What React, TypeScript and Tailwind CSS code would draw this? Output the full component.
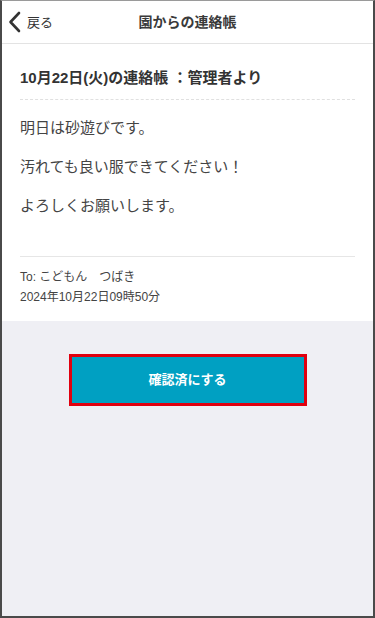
export default function App() {
  const font = { fontFamily: '"Liberation Sans", "Noto Sans CJK JP", sans-serif' };
  return (
    <div
      className="w-[375px] h-[618px] flex flex-col bg-[#efeff4] border-2 border-t border-[#4a4a4a] border-t-[#9a9a9a] overflow-hidden"
      style={font}
    >
      <header className="h-[43px] shrink-0 bg-white border-b border-[#e3e3e3] flex items-center relative">
        <button className="flex items-center pl-[5px] gap-[4px] text-[#333] z-10">
          <svg width="16" height="22" viewBox="0 0 16 22" fill="none">
            <path d="M12 2 L3.5 11 L12 20" stroke="#333" strokeWidth="2.6" strokeLinecap="round" strokeLinejoin="round" />
          </svg>
          <span className="text-[13px] leading-none">戻る</span>
        </button>
        <h1 className="absolute inset-0 flex items-center justify-center text-[14px] font-bold text-[#3a3a3a]">
          園からの連絡帳
        </h1>
      </header>

      <section className="bg-white px-[18px] pt-[23px] pb-[14px]">
        <h2 className="text-[15px] font-bold text-[#333] leading-[22px] pb-[10px] border-b border-dashed border-[#e0e0e0]">
          10月22日(火)の連絡帳 ：管理者より
        </h2>
        <div className="pt-[17px] pb-[39px] text-[15px] text-[#444] leading-[22px] flex flex-col gap-[17px]">
          <p>明日は砂遊びです。</p>
          <p>汚れても良い服できてください！</p>
          <p>よろしくお願いします。</p>
        </div>
        <div className="border-t border-[#e6e6e6] pt-[10px] text-[12px] text-[#444] leading-[20px]">
          <p>To: こどもん　つばき</p>
          <p>2024年10月22日09時50分</p>
        </div>
      </section>

      <div className="flex justify-center pt-[33px]">
        <div className="border-[3px] border-[#e0000f]">
          <button className="w-[232px] h-[46px] bg-[#00a0c2] text-white text-[13px] font-bold">
            確認済にする
          </button>
        </div>
      </div>
    </div>
  );
}
